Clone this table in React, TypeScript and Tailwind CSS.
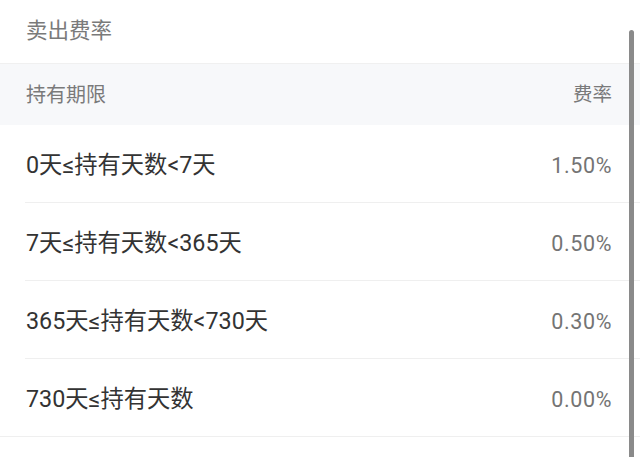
const rows = [
    { range: "0天≤持有天数<7天", rate: "1.50%" },
    { range: "7天≤持有天数<365天", rate: "0.50%" },
    { range: "365天≤持有天数<730天", rate: "0.30%" },
    { range: "730天≤持有天数", rate: "0.00%" },
];

const App = () => {
    return (
        <div className="relative w-[640px] h-[457px] overflow-hidden bg-white font-['Roboto','Noto_Sans_CJK_SC',sans-serif]">
            <div className="h-[64px] flex items-center px-[26px] border-b border-[#f0f0f0]">
                <p className="text-[21.5px] text-[#7a7a7a] leading-none -mt-[1px]">卖出费率</p>
            </div>
            <div className="h-[61px] bg-[#f7f8fa] flex items-center justify-between pl-[26px] pr-[28px]">
                <p className="text-[20px] text-[#7a7a7a] leading-none">持有期限</p>
                <p className="text-[19.5px] text-[#7a7a7a] leading-none">费率</p>
            </div>
            <div className="flex flex-col">
                {rows.map((row, i) => (
                    <div key={i} className={`h-[78px] flex ${i === rows.length - 1 ? "" : "pl-[25px]"}`}>
                        <div className={`flex-1 flex items-center justify-between border-b border-[#efefef] pr-[28px] ${i === rows.length - 1 ? "pl-[25px]" : ""}`}>
                            <p className="text-[23.3px] text-[#333333] leading-none ml-[1px] mt-[5px]">{row.range}</p>
                            <p className="text-[21.5px] text-[#747474] leading-none tracking-[0.6px] mt-[5px]">{row.rate}</p>
                        </div>
                    </div>
                ))}
            </div>
            <div className="absolute left-[629px] top-[30px] w-[5px] h-[440px] bg-[#8a8a8a] rounded-t-full"></div>
        </div>
    );
};

export default App;
